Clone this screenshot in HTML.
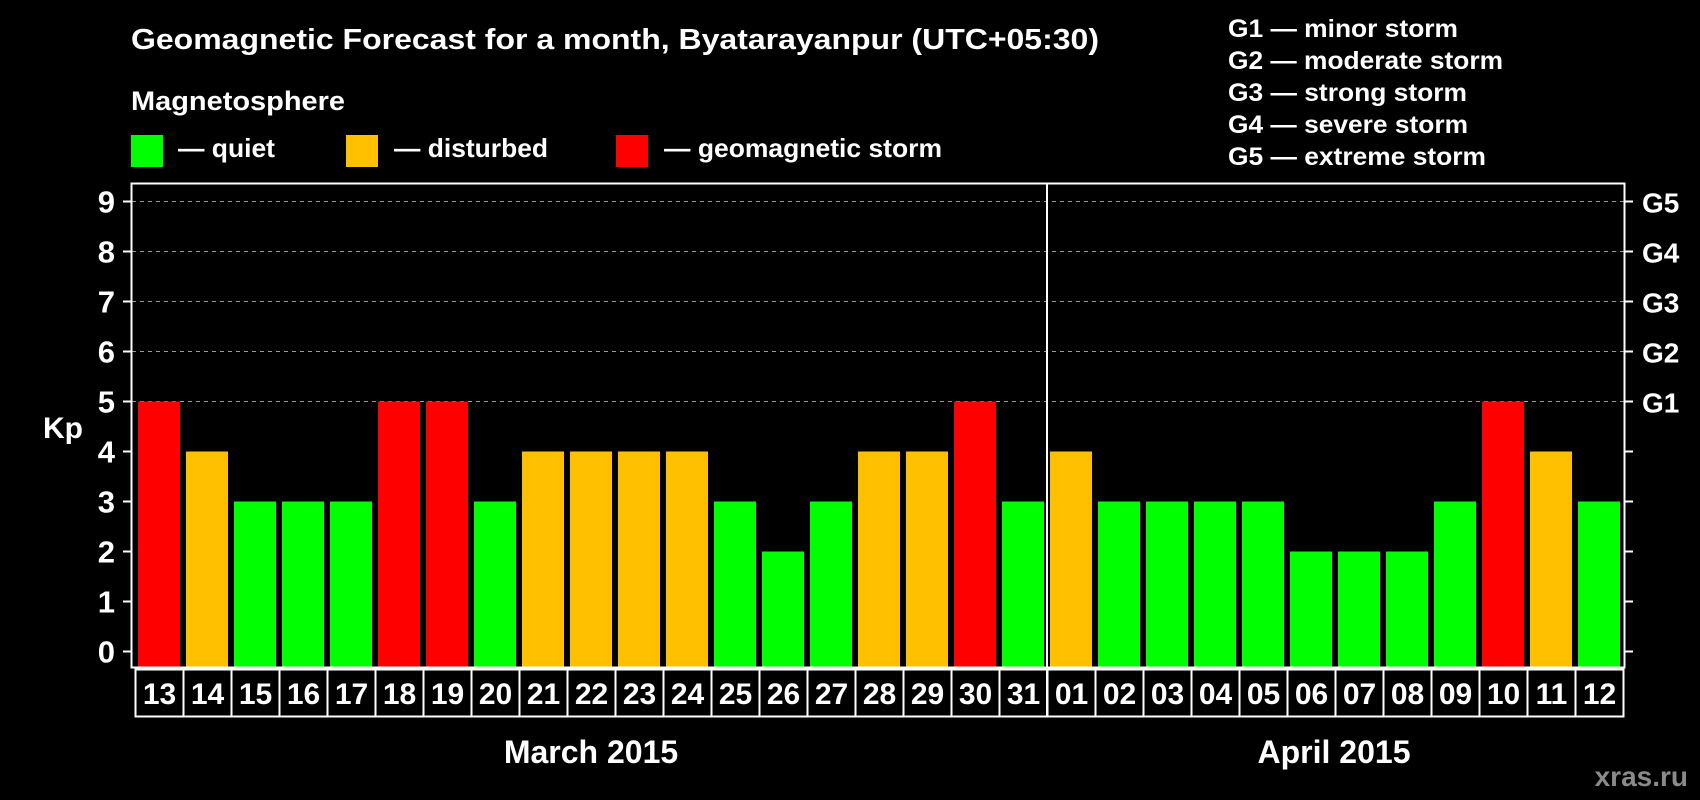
<!DOCTYPE html>
<html><head><meta charset="utf-8"><style>
html,body{margin:0;padding:0;background:#000;width:1700px;height:800px;overflow:hidden}
svg{display:block}
text{font-family:"Liberation Sans",Arial,sans-serif;font-weight:bold;fill:#fff}
</style></head><body>
<svg width="1700" height="800" viewBox="0 0 1700 800" xmlns="http://www.w3.org/2000/svg">
<rect width="1700" height="800" fill="#000"/>
<text x="131" y="49" font-size="29" textLength="968" lengthAdjust="spacingAndGlyphs">Geomagnetic Forecast for a month, Byatarayanpur (UTC+05:30)</text>
<text x="131" y="110" font-size="27" textLength="214" lengthAdjust="spacingAndGlyphs">Magnetosphere</text>
<rect x="131" y="135" width="32" height="32" fill="#00ff00"/>
<text x="178" y="157" font-size="26" textLength="97" lengthAdjust="spacingAndGlyphs">— quiet</text>
<rect x="346" y="135" width="32" height="32" fill="#ffc000"/>
<text x="394" y="157" font-size="26" textLength="154" lengthAdjust="spacingAndGlyphs">— disturbed</text>
<rect x="616" y="135" width="32" height="32" fill="#ff0000"/>
<text x="664" y="157" font-size="26" textLength="278" lengthAdjust="spacingAndGlyphs">— geomagnetic storm</text>
<g font-size="25">
<text x="1228" y="37" textLength="230" lengthAdjust="spacingAndGlyphs">G1 — minor storm</text>
<text x="1228" y="69" textLength="275" lengthAdjust="spacingAndGlyphs">G2 — moderate storm</text>
<text x="1228" y="101" textLength="239" lengthAdjust="spacingAndGlyphs">G3 — strong storm</text>
<text x="1228" y="133" textLength="240" lengthAdjust="spacingAndGlyphs">G4 — severe storm</text>
<text x="1228" y="165" textLength="258" lengthAdjust="spacingAndGlyphs">G5 — extreme storm</text>
</g>
<g stroke="#999" stroke-width="1" stroke-dasharray="4,4">
<line x1="132" y1="201.5" x2="1624" y2="201.5"/>
<line x1="132" y1="251.5" x2="1624" y2="251.5"/>
<line x1="132" y1="301.5" x2="1624" y2="301.5"/>
<line x1="132" y1="351.5" x2="1624" y2="351.5"/>
<line x1="132" y1="401.5" x2="1624" y2="401.5"/>
</g>
<g id="bars"></g>
<rect x="131.5" y="183.5" width="1493" height="484" fill="none" stroke="#fff" stroke-width="2"/>
<line x1="1047" y1="183" x2="1047" y2="716" stroke="#fff" stroke-width="2"/>
<g id="ax"></g>
<text x="43" y="438" font-size="30">Kp</text>
<text x="591" y="763" font-size="32" text-anchor="middle">March 2015</text>
<text x="1334" y="763" font-size="32" text-anchor="middle">April 2015</text>
<text x="1688" y="786" font-size="28" text-anchor="end" style="fill:#8a8a8a">xras.ru</text>
<script>
(function(){
var vals=[5,4,3,3,3,5,5,3,4,4,4,4,3,2,3,4,4,5,3,4,3,3,3,3,2,2,2,3,5,4,3];
var days=["13","14","15","16","17","18","19","20","21","22","23","24","25","26","27","28","29","30","31","01","02","03","04","05","06","07","08","09","10","11","12"];
var ns="http://www.w3.org/2000/svg",b=document.getElementById("bars"),a=document.getElementById("ax");
function el(t,at,p,txt){var e=document.createElementNS(ns,t);for(var k in at)e.setAttribute(k,at[k]);if(txt)e.textContent=txt;p.appendChild(e);return e;}
for(var i=0;i<31;i++){var v=vals[i],c=v>=5?"#ff0000":v==4?"#ffc000":"#00ff00";var ty=651.5-50*v;
el("rect",{x:138+48*i,y:ty,width:42,height:667-ty,fill:c},b);
el("rect",{x:135.5+48*i,y:669.5,width:48,height:47,fill:"none",stroke:"#fff","stroke-width":2},a);
el("text",{x:159.5+48*i,y:704,"font-size":30,"text-anchor":"middle"},a,days[i]);}
var g=["","","","","","G1","G2","G3","G4","G5"];
for(var k=0;k<=9;k++){var y=651.5-50*k;
el("line",{x1:123,y1:y,x2:131,y2:y,stroke:"#fff","stroke-width":2},a);
el("line",{x1:1625,y1:y,x2:1633,y2:y,stroke:"#fff","stroke-width":2},a);
el("text",{x:115,y:y+11,"font-size":31,"text-anchor":"end"},a,""+k);
if(g[k])el("text",{x:1642,y:y+11,"font-size":28},a,g[k]);}
})();
</script>
</svg>
</body></html>
